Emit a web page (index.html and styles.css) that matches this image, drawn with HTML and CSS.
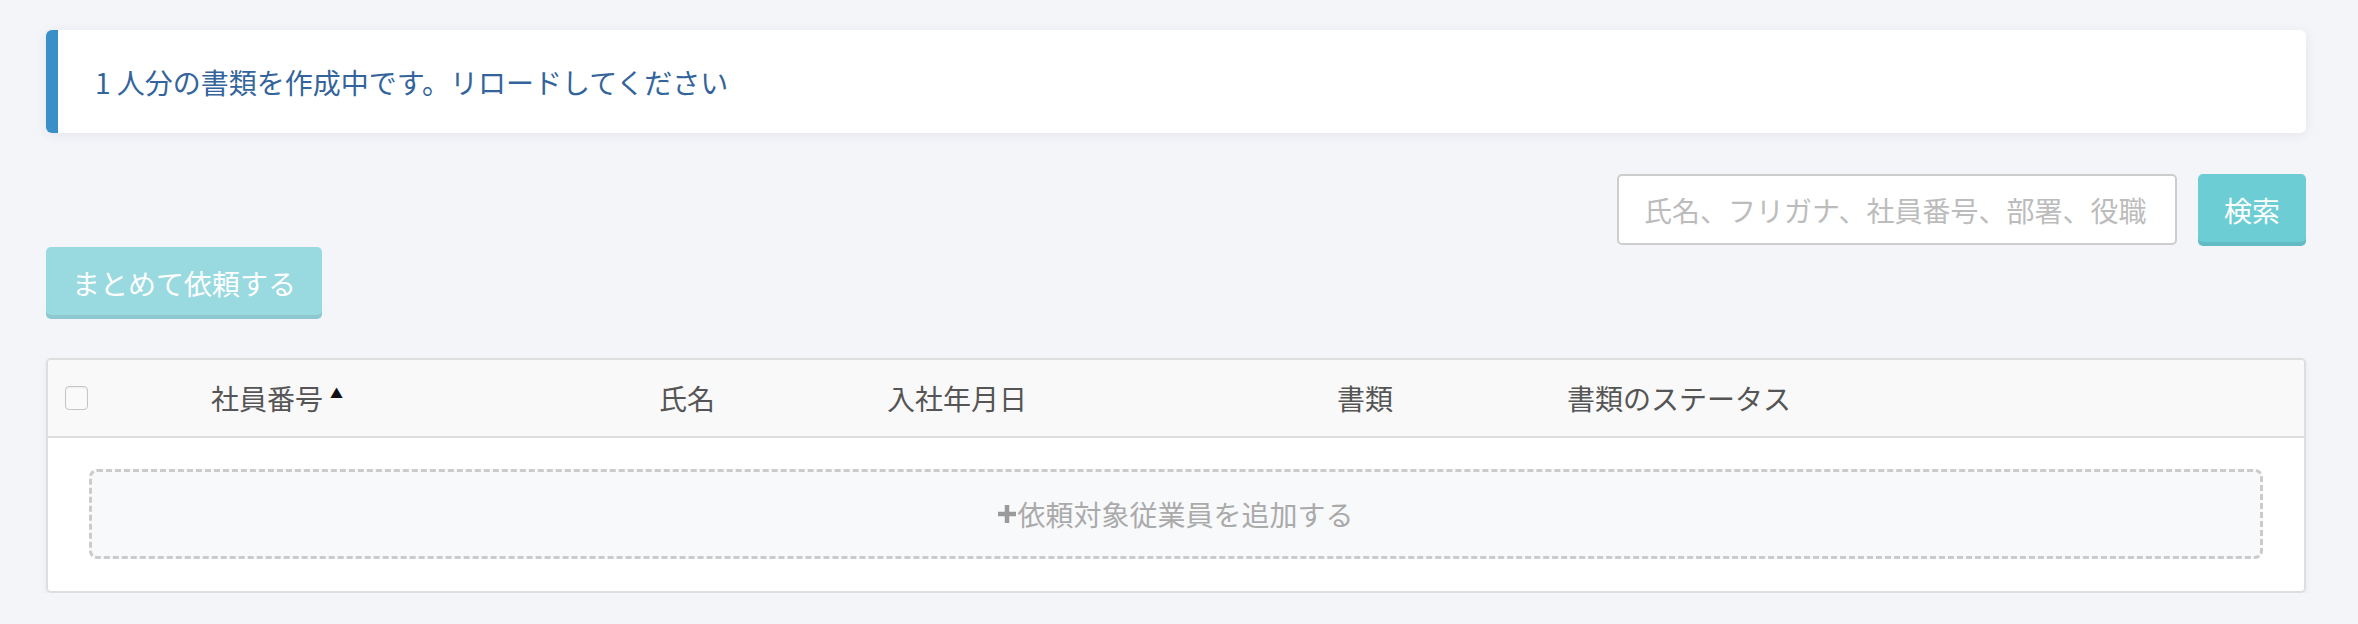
FILE: index.html
```html
<!DOCTYPE html>
<html lang="ja">
<head>
<meta charset="utf-8">
<title>書類作成</title>
<link rel="stylesheet" href="styles.css">
</head>
<body>
<div class="page">
  <div class="alert">1 人分の書類を作成中です。リロードしてください</div>

  <div class="search-row">
    <input class="search-input" type="text" placeholder="氏名、フリガナ、社員番号、部署、役職">
    <button class="btn btn-search">検索</button>
  </div>

  <div class="action-row">
    <button class="btn btn-bulk">まとめて依頼する</button>
  </div>

  <div class="table">
    <div class="thead">
      <div class="cell cell-check"><span class="checkbox"></span></div>
      <div class="cell">社員番号<span class="sort">▲</span></div>
      <div class="cell">氏名</div>
      <div class="cell">入社年月日</div>
      <div class="cell">書類</div>
      <div class="cell">書類のステータス</div>
    </div>
    <div class="tbody">
      <div class="add-box">
        <svg class="plus" viewBox="0 0 16 16" width="18" height="18"><path d="M6 0h4v6h6v4h-6v6h-4v-6h-6v-4h6z" fill="#9a9a9a"/></svg><span>依頼対象従業員を追加する</span>
      </div>
    </div>
  </div>
</div>
</body>
</html>
```

FILE: styles.css
```css
html, body {
  margin: 0;
  padding: 0;
  background: #f4f5f9;
}
body {
  font-family: "Noto Sans CJK JP", "Noto Sans", sans-serif;
  font-size: 28px;
  color: #555;
}
.page {
  padding: 30px 52px 0 46px;
}
.alert {
  height: 103px;
  box-sizing: border-box;
  background: #fff;
  border-left: 12px solid #3a8fc9;
  border-radius: 6px;
  box-shadow: 0 2px 12px rgba(40, 50, 80, 0.08);
  padding-left: 37px;
  display: flex;
  align-items: center;
  color: #33649b;
}
.search-row {
  display: flex;
  justify-content: flex-end;
  gap: 21px;
  margin-top: 41px;
}
.search-input {
  width: 560px;
  height: 71px;
  box-sizing: border-box;
  border: 2px solid #cdcdcd;
  border-radius: 5px;
  background: #fff;
  padding: 0 0 0 25px;
  font-family: inherit;
  font-size: 28px;
  color: #555;
  outline: none;
}
.search-input::placeholder {
  color: #bcbcbc;
}
.btn {
  border: none;
  border-radius: 5px;
  color: #fff;
  font-family: inherit;
  font-size: 28px;
  height: 72px;
  padding: 0 27px;
  box-shadow: inset 0 -4px 0 rgba(0, 0, 0, 0.08);
  cursor: pointer;
}
.btn-search {
  width: 108px;
  padding: 0;
  background: #6ccdd4;
}
.action-row {
  display: flex;
  margin-top: 1px;
}
.btn-bulk {
  width: 276px;
  padding: 0;
  background: #99d9e0;
}
.table {
  margin-top: 39px;
  background: #fff;
  border: 2px solid #dedede;
  border-radius: 5px;
  box-shadow: 0 3px 6px rgba(0, 0, 0, 0.05);
  overflow: hidden;
}
.thead {
  display: grid;
  grid-template-columns: 163px 448px 228px 450px 230px 1fr;
  height: 76px;
  background: #f9f9f9;
  border-bottom: 2px solid #dedede;
  align-items: center;
  color: #555;
}
.cell {
  display: flex;
  align-items: center;
  white-space: nowrap;
}
.cell-check {
  padding-left: 17px;
}
.checkbox {
  width: 21px;
  height: 22px;
  border: 1px solid #c6c6c6;
  border-radius: 4px;
  background: #fafafa;
  box-shadow: inset 0 1px 2px rgba(0, 0, 0, 0.06);
}
.sort {
  font-size: 13px;
  color: #111;
  margin-left: 7px;
  margin-top: -12px;
}
.tbody {
  padding: 31px 41px 32px 41px;
}
.add-box {
  height: 90px;
  box-sizing: border-box;
  border: 3px dashed #cbcbcb;
  border-radius: 8px;
  background: #f8f9fb;
  display: flex;
  align-items: center;
  justify-content: center;
  color: #aaa;
}
.plus {
  margin-right: 1px;
}
```
